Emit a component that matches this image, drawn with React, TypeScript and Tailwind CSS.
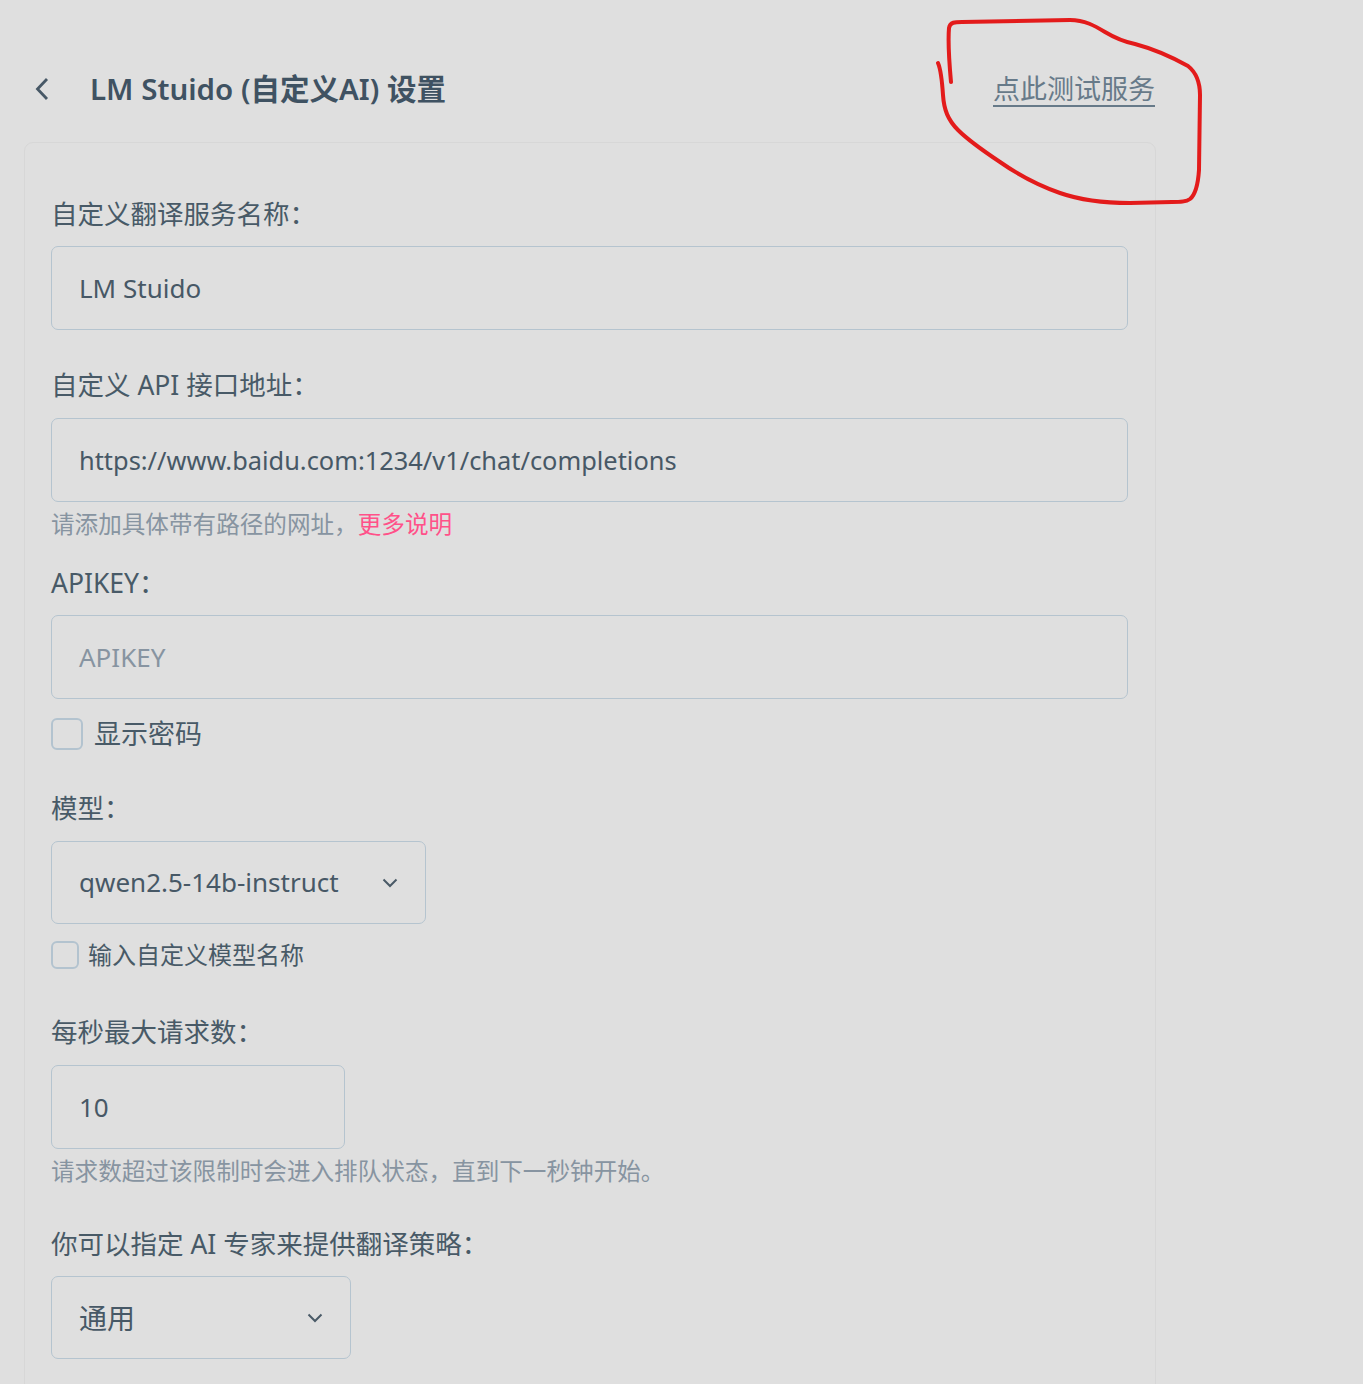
import * as React from 'react'

const font = { fontFamily: '"Noto Sans", "Noto Sans CJK SC", sans-serif' }

function Label({ children, className = '' }: { children: React.ReactNode; className?: string }) {
  return (
    <div className={`text-[26.5px] leading-[39px] text-[#485a67] ${className}`}>{children}</div>
  )
}

function Field({ value, placeholder, className = '', textClass = '' }: { value?: string; placeholder?: string; className?: string; textClass?: string }) {
  return (
    <div
      className={`h-[84px] flex items-center rounded-[7px] border border-[#b5c4cf] px-[27px] text-[26px] ${className}`}
    >
      {value ? (
        <span className={`text-[#475866] ${textClass}`}>{value}</span>
      ) : (
        <span className="text-[#8794a1]">{placeholder}</span>
      )}
    </div>
  )
}

function Select({ value, className = '' }: { value: string; className?: string }) {
  return (
    <div
      className={`h-[83px] flex items-center justify-between rounded-[7px] border border-[#b5c4cf] pl-[27px] pr-[27px] ${className}`}
    >
      <span className="text-[#475866]">{value}</span>
      <svg width="16" height="10" viewBox="0 0 16 10" fill="none" stroke="#4a5a67" strokeWidth="2">
        <path d="M1.5 1.5 L8 8 L14.5 1.5" />
      </svg>
    </div>
  )
}

function Checkbox({ size }: { size: number }) {
  return (
    <div
      style={{ width: size, height: size }}
      className="shrink-0 rounded-[6px] border-2 border-[#b3c3cf]"
    />
  )
}

export default function App() {
  return (
    <div style={font} className="relative min-h-screen w-full bg-[#dfdfdf] px-[24px] pb-[40px]">
      <div className="w-[1132px] h-[142px] pt-[36px] flex items-center justify-between">
        <div className="flex items-center">
          <svg width="20" height="26" viewBox="0 0 20 26" fill="none" stroke="#475866" strokeWidth="2.8" className="ml-[10px]">
            <path d="M13 3 L3.5 13 L13 23" />
          </svg>
          <h1 className="ml-[36px] text-[29.5px] font-semibold text-[#3f5262]">LM Stuido (自定义AI) 设置</h1>
        </div>
        <a className="mr-[1px] text-[27px] text-[#677a89] underline underline-offset-[6px] decoration-[1.5px]">点此测试服务</a>
      </div>

      <div className="w-[1132px] rounded-[9px] border border-[#d7d7d7] pl-[26px] pr-[27px] pt-[52px] pb-[40px]">
        <Label>自定义翻译服务名称：</Label>
        <Field className="mt-[12px]" value="LM Stuido" />

        <Label className="mt-[36px]">自定义 API 接口地址：</Label>
        <Field className="mt-[13px]" textClass="text-[25.4px]" value="https://www.baidu.com:1234/v1/chat/completions" />
        <div className="mt-[4px] text-[23.6px] leading-[36px] text-[#8794a1]">
          请添加具体带有路径的网址，<span className="text-[#ff5189]">更多说明</span>
        </div>

        <Label className="mt-[22px]">APIKEY：</Label>
        <Field className="mt-[12px]" placeholder="APIKEY" />

        <div className="mt-[19px] flex items-center gap-[11px]">
          <Checkbox size={32} />
          <span className="text-[27px] leading-[32px] text-[#485a67]">显示密码</span>
        </div>

        <Label className="mt-[39px]">模型：</Label>
        <Select className="mt-[13px] w-[375px] text-[26px]" value="qwen2.5-14b-instruct" />

        <div className="mt-[17px] flex items-center gap-[9px]">
          <Checkbox size={28} />
          <span className="text-[24px] leading-[28px] text-[#485a67]">输入自定义模型名称</span>
        </div>

        <Label className="mt-[44px]">每秒最大请求数：</Label>
        <Field className="mt-[13px] w-[294px]" value="10" />
        <div className="mt-[4px] text-[23.6px] leading-[36px] text-[#8794a1]">
          请求数超过该限制时会进入排队状态，直到下一秒钟开始。
        </div>

        <Label className="mt-[36px]">你可以指定 AI 专家来提供翻译策略：</Label>
        <Select className="mt-[12px] w-[300px] text-[28px]" value="通用" />
      </div>

      <svg
        className="absolute left-0 top-0 pointer-events-none"
        width="1363"
        height="260"
        viewBox="0 0 1363 260"
        fill="none"
        stroke="#e31b1b"
        strokeWidth="4"
        strokeLinecap="round"
        strokeLinejoin="round"
      >
        <path d="M951 82 C949 60 948 40 949 28 C950 22 955 22 962 22 L1070 20 C1085 20 1095 26 1105 32 C1115 38 1125 42 1135 44 C1150 48 1170 56 1188 66 C1198 74 1200 84 1200 95 L1199 170 C1198 185 1195 195 1190 199 C1186 202 1180 202 1172 202 L1130 203 C1100 203 1080 200 1060 193 C1040 186 1020 176 1000 162 C985 152 970 142 958 130 C948 120 944 110 943 95 C942 80 941 70 938 63" />
      </svg>
    </div>
  )
}
